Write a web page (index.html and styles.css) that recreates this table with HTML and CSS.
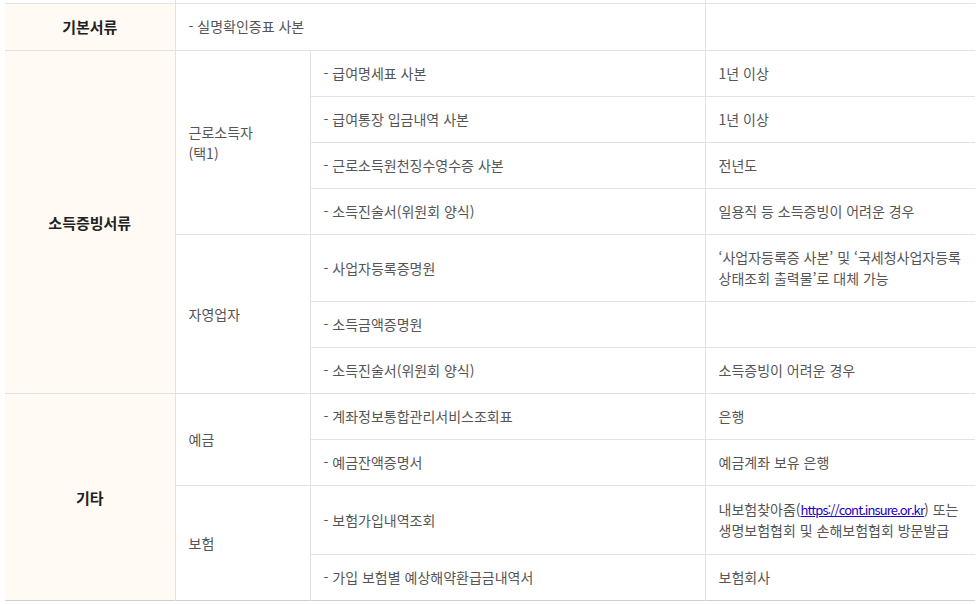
FILE: index.html
```html
<!DOCTYPE html>
<html lang="ko">
<head>
<meta charset="utf-8">
<title>제출서류</title>
<link rel="stylesheet" href="styles.css">
</head>
<body>
<div class="viewport">
  <table class="doc-table">
    <colgroup>
      <col class="w1"><col class="w2"><col class="w3"><col class="w4">
    </colgroup>
    <tbody>
      <tr class="prev-row">
        <td class="th blank"></td>
        <td colspan="2"></td>
        <td></td>
      </tr>
      <tr class="first-row">
        <th class="th">기본서류</th>
        <td colspan="2">- 실명확인증표 사본</td>
        <td></td>
      </tr>
      <tr>
        <th class="th" rowspan="7">소득증빙서류</th>
        <td rowspan="4">근로소득자<br>(택1)</td>
        <td>- 급여명세표 사본</td>
        <td>1년 이상</td>
      </tr>
      <tr>
        <td>- 급여통장 입금내역 사본</td>
        <td>1년 이상</td>
      </tr>
      <tr>
        <td>- 근로소득원천징수영수증 사본</td>
        <td>전년도</td>
      </tr>
      <tr>
        <td>- 소득진술서(위원회 양식)</td>
        <td>일용직 등 소득증빙이 어려운 경우</td>
      </tr>
      <tr>
        <td rowspan="3">자영업자</td>
        <td>- 사업자등록증명원</td>
        <td class="nowrap">‘사업자등록증 사본’ 및 ‘국세청사업자등록<br>상태조회 출력물’로 대체 가능</td>
      </tr>
      <tr>
        <td>- 소득금액증명원</td>
        <td></td>
      </tr>
      <tr>
        <td>- 소득진술서(위원회 양식)</td>
        <td>소득증빙이 어려운 경우</td>
      </tr>
      <tr>
        <th class="th" rowspan="4">기타</th>
        <td rowspan="2">예금</td>
        <td>- 계좌정보통합관리서비스조회표</td>
        <td>은행</td>
      </tr>
      <tr>
        <td>- 예금잔액증명서</td>
        <td>예금계좌 보유 은행</td>
      </tr>
      <tr class="tall-row">
        <td rowspan="2">보험</td>
        <td>- 보험가입내역조회</td>
        <td class="nowrap">내보험찾아줌(<a href="#">https://cont.insure.or.kr</a>) 또는<br>생명보험협회 및 손해보험협회 방문발급</td>
      </tr>
      <tr>
        <td>- 가입 보험별 예상해약환급금내역서</td>
        <td>보험회사</td>
      </tr>
    </tbody>
  </table>
</div>
</body>
</html>
```

FILE: styles.css
```css
html, body {
  margin: 0;
  padding: 0;
  background: #ffffff;
}

.viewport {
  height: 604px;
  overflow: hidden;
  padding-left: 5px;
}

.doc-table {
  width: 970px;
  border-collapse: collapse;
  table-layout: fixed;
  font-family: "Noto Sans CJK KR", "Noto Sans", sans-serif;
  font-size: 14px;
  line-height: 21px;
  color: #555555;
  border-bottom: 1px solid #cfcfcf;
}

.w1 { width: 170px; }
.w2 { width: 135px; }
.w3 { width: 395px; }
.w4 { width: 270px; }

.doc-table td,
.doc-table th {
  border-top: 1px solid #e3e3e3;
  border-left: 1px solid #e3e3e3;
  border-right: 0;
  border-bottom: 0;
  padding: 12px 13px;
  vertical-align: middle;
  text-align: left;
  font-weight: normal;
}

.doc-table .th {
  border-left: 0;
  background: #fffaf4;
  text-align: center;
  font-size: 15px;
  font-weight: bold;
  color: #222222;
}

.prev-row td {
  height: 3px;
  padding: 0;
  border-top: 0;
}

.prev-row .blank {
  background: #ffffff;
}

.first-row td,
.first-row th {
  padding-bottom: 13px;
}

.tall-row td {
  padding-top: 13px;
  padding-bottom: 13px;
}

.nowrap {
  white-space: nowrap;
}

.doc-table a {
  font-size: 13px;
  color: #2200cc;
  text-decoration: underline;
  letter-spacing: -0.9px;
}
```
